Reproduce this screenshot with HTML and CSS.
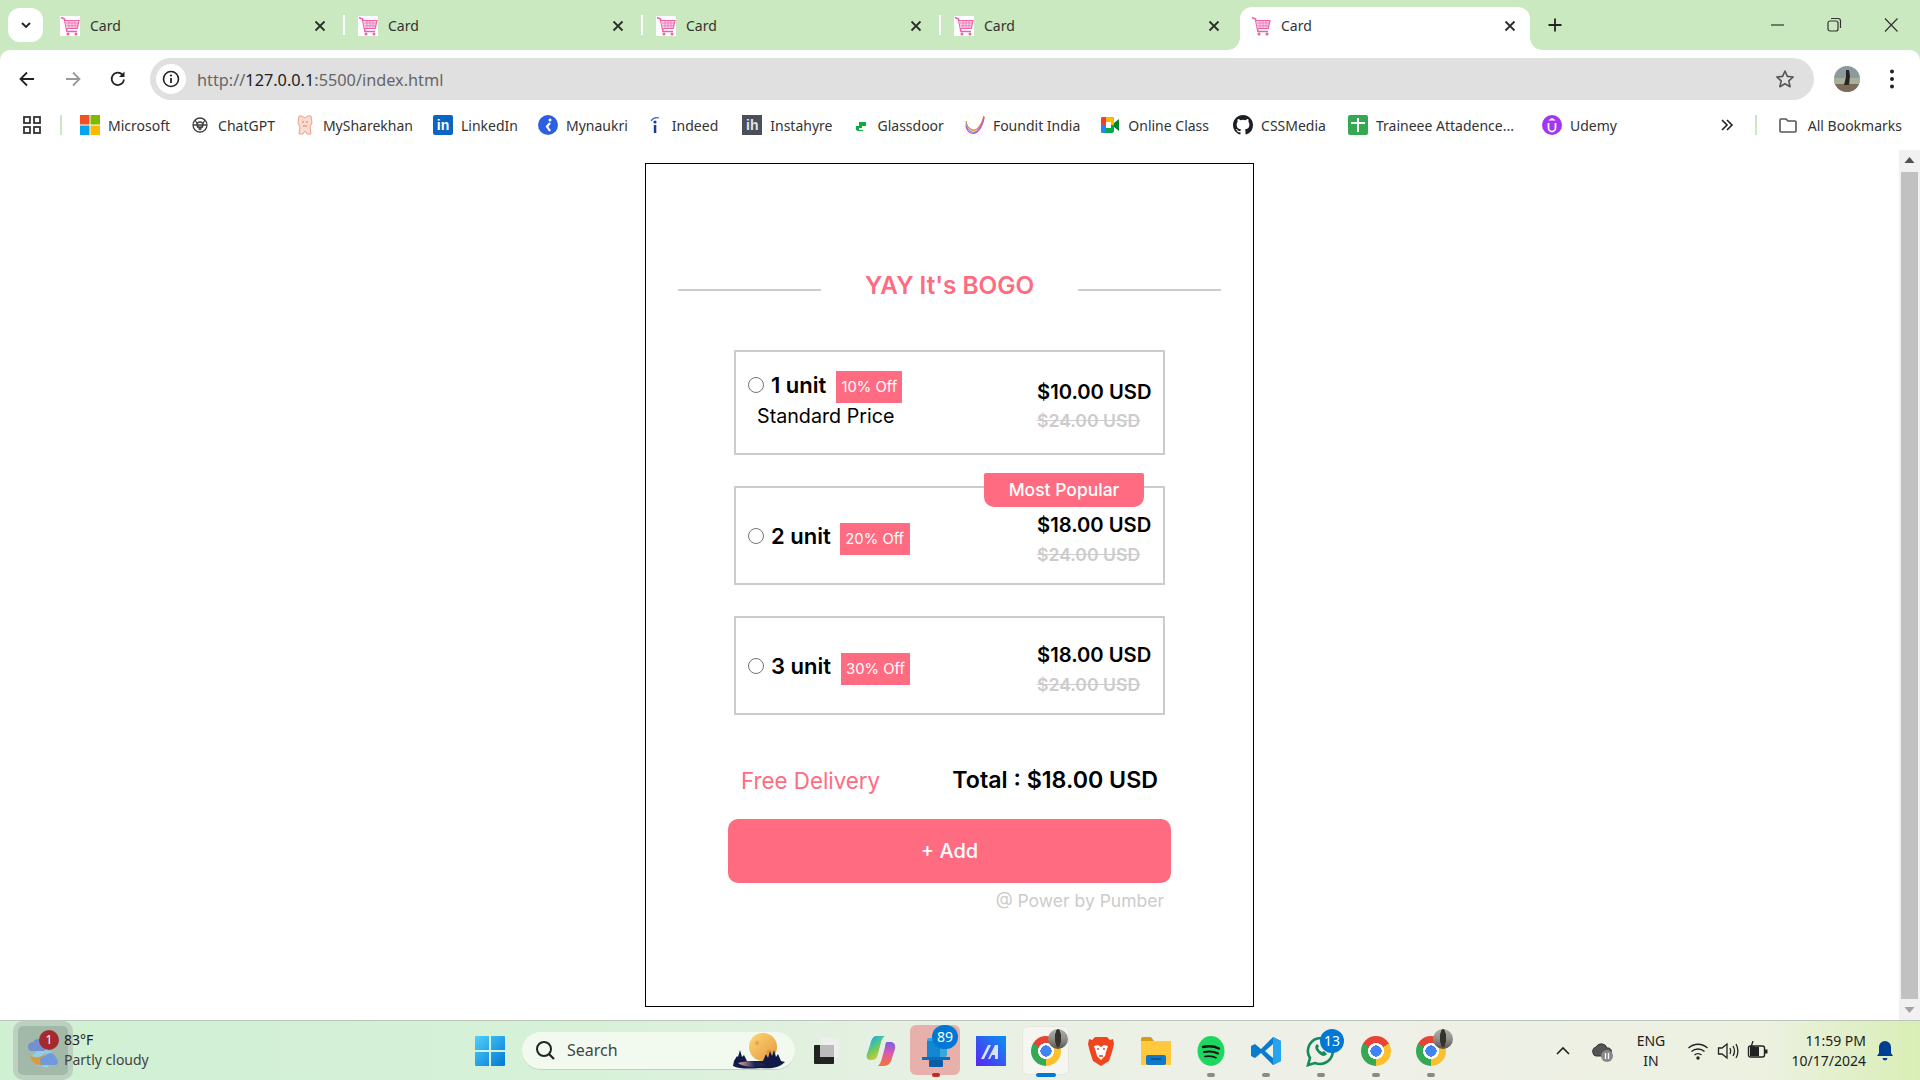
FILE: index.html
```html
<!DOCTYPE html>
<html lang="en">
<head>
<meta charset="utf-8">
<title>Card</title>
<link rel="stylesheet" href="styles.css">
</head>
<body>
<svg class="defs" width="0" height="0" aria-hidden="true">
  <symbol id="cart" viewBox="0 0 20 20">
    <rect width="20" height="20" fill="#fff"/>
    <path d="M1 1.500l3.500 1.500 2.500 12.500h10" fill="none" stroke="#ee5fa7" stroke-width="1.600"/>
    <path d="M5 4.500h14l-1.800 8H6.600" fill="#fbd3e6" stroke="#ee5fa7" stroke-width="1.200"/>
    <path d="M6 7h12.500M6.500 9.800h11.500M9 4.500v8M12 4.500v8M15 4.500v8" stroke="#ef74b3" stroke-width=".8"/>
    <circle cx="8" cy="18" r="1.500" fill="#ee5fa7"/><circle cx="16" cy="18" r="1.500" fill="#ee5fa7"/>
  </symbol>
  <symbol id="close" viewBox="0 0 20 20"><path d="M5.500 5.500l9 9M14.500 5.500l-9 9" stroke="#2a2f2a" stroke-width="1.800" fill="none"/></symbol>
</svg>

<div class="tabbar">
  <div class="tab-chip"><svg width="14" height="14" viewBox="0 0 14 14"><path d="M3 5l4 4 4-4" fill="none" stroke="#222" stroke-width="1.800"/></svg></div>
  <div class="tab"><svg class="fav"><use href="#cart"/></svg><span class="tab-title">Card</span><svg class="tab-x"><use href="#close"/></svg></div>
  <div class="tab"><svg class="fav"><use href="#cart"/></svg><span class="tab-title">Card</span><svg class="tab-x"><use href="#close"/></svg></div>
  <div class="tab"><svg class="fav"><use href="#cart"/></svg><span class="tab-title">Card</span><svg class="tab-x"><use href="#close"/></svg></div>
  <div class="tab"><svg class="fav"><use href="#cart"/></svg><span class="tab-title">Card</span><svg class="tab-x"><use href="#close"/></svg></div>
  <div class="tab tab-active"><svg class="fav"><use href="#cart"/></svg><span class="tab-title">Card</span><svg class="tab-x"><use href="#close"/></svg></div>
  <svg class="tab-plus" width="20" height="20" viewBox="0 0 20 20"><path d="M10 3.500v13M3.500 10h13" stroke="#222" stroke-width="1.800"/></svg>
  <div class="win-controls">
    <svg width="20" height="20" viewBox="0 0 20 20"><path d="M4 10h13" stroke="#333" stroke-width="1.200"/></svg>
    <svg width="20" height="20" viewBox="0 0 20 20"><rect x="4" y="6" width="10" height="10" rx="2" fill="none" stroke="#333" stroke-width="1.200"/><path d="M7 3.500h7a2.500 2.500 0 0 1 2.500 2.500v7" fill="none" stroke="#333" stroke-width="1.200"/></svg>
    <svg width="20" height="20" viewBox="0 0 20 20"><path d="M4 3.500l12.500 13M16.500 3.500L4 16.500" stroke="#333" stroke-width="1.200"/></svg>
  </div>
</div>

<div class="toolbar">
  <svg class="tool tool-back" width="20" height="20" viewBox="0 0 20 20"><path d="M17 10H4M10 3.500L3.500 10l6.500 6.500" fill="none" stroke="#222" stroke-width="1.800"/></svg>
  <svg class="tool tool-fwd" width="20" height="20" viewBox="0 0 20 20"><path d="M3 10h13M10 3.500l6.500 6.500-6.500 6.500" fill="none" stroke="#9a9a9a" stroke-width="1.800"/></svg>
  <svg class="tool tool-reload" width="20" height="20" viewBox="0 0 20 20"><path d="M16 10.500A6.200 6.200 0 1 1 14.300 5.500" fill="none" stroke="#222" stroke-width="1.800"/><path d="M16.500 2.500v5.500H11z" fill="#222"/></svg>
  <div class="omnibox">
    <span class="omni-info"><svg width="20" height="20" viewBox="0 0 20 20"><circle cx="10" cy="10" r="7.500" fill="none" stroke="#222" stroke-width="1.600"/><path d="M10 9v5" stroke="#222" stroke-width="1.800"/><circle cx="10" cy="6.500" r="1.100" fill="#222"/></svg></span>
    <span class="omni-url">http://<b class="omni-host">127.0.0.1</b>:5500/index.html</span>
    <svg class="omni-star" width="22" height="22" viewBox="0 0 22 22"><path d="M11 3l2.400 5.400 5.800.6-4.400 3.900 1.300 5.800L11 15.700l-5.100 3 1.300-5.800L2.800 9l5.800-.6z" fill="none" stroke="#555" stroke-width="1.600" stroke-linejoin="round"/></svg>
  </div>
  <svg class="avatar" width="26" height="26" viewBox="0 0 26 26"><defs><clipPath id="av"><circle cx="13" cy="13" r="13"/></clipPath></defs><g clip-path="url(#av)"><rect width="26" height="26" fill="#8b9a9c"/><rect y="12" width="26" height="6" fill="#a9b09a"/><rect y="18" width="26" height="8" fill="#7d6a58"/><path d="M12 4h3l1 6-1 9h-5l2-8z" fill="#26241f"/></g></svg>
  <svg class="tool-menu" width="6" height="22" viewBox="0 0 6 22"><circle cx="3" cy="3.500" r="2" fill="#222"/><circle cx="3" cy="11" r="2" fill="#222"/><circle cx="3" cy="18.500" r="2" fill="#222"/></svg>
</div>

<div class="bookmarks">
  <svg class="bm-apps" width="20" height="20" viewBox="0 0 20 20"><g fill="none" stroke="#333" stroke-width="1.800"><rect x="2" y="2" width="6" height="6"/><rect x="12" y="2" width="6" height="6"/><rect x="2" y="12" width="6" height="6"/><rect x="12" y="12" width="6" height="6"/></g></svg>
  <span class="bm-sep bm-sep-first"></span>
  <div class="bm-list">
    <div class="bm"><svg class="fav" viewBox="0 0 20 20"><rect width="9.500" height="9.500" fill="#f25022"/><rect x="10.500" width="9.500" height="9.500" fill="#7fba00"/><rect y="10.500" width="9.500" height="9.500" fill="#00a4ef"/><rect x="10.500" y="10.500" width="9.500" height="9.500" fill="#ffb900"/></svg>Microsoft</div>
    <div class="bm"><svg class="fav" viewBox="0 0 20 20"><g fill="none" stroke="#444" stroke-width="1.300"><circle cx="10" cy="10" r="7"/><circle cx="10" cy="10" r="3"/><path d="M5 5l6 10M15 5L9 15M3 10h14"/></g></svg>ChatGPT</div>
    <div class="bm"><svg class="fav" viewBox="0 0 20 20"><path d="M4 1h3l3 2 3-2h3l1 7-2 4 1 7h-4l-2-3-2 3H4l1-7-2-4z" fill="#fbdcd0" stroke="#f0a18c"/><path d="M7 7h2M11 7h2M8 11h4" stroke="#e8795e"/></svg>MySharekhan</div>
    <div class="bm"><span class="fav fav-li">in</span>LinkedIn</div>
    <div class="bm"><svg class="fav" viewBox="0 0 20 20"><circle cx="10" cy="10" r="10" fill="#2d5fe0"/><circle cx="12" cy="5" r="1.500" fill="#fff"/><path d="M12 8l-3 3.500 3 4.500" fill="none" stroke="#fff" stroke-width="2.200"/></svg>Mynaukri</div>
    <div class="bm bm-indeed"><svg class="fav-narrow" viewBox="0 0 12 20"><path d="M2 6c2-3 5-4 8-3" fill="none" stroke="#2f66c8" stroke-width="1.200"/><circle cx="6" cy="7" r="1.600" fill="#143d9c"/><rect x="4.800" y="10" width="2.500" height="8" fill="#143d9c"/></svg>Indeed</div>
    <div class="bm bm-insta"><span class="fav fav-ih">ih</span>Instahyre</div>
    <div class="bm bm-glass"><svg class="fav-narrow" viewBox="0 0 12 20"><path d="M4 7h7v4H7v2H4zM1 11h3v4h4v1H3l-2-1z" fill="#0caa41"/></svg>Glassdoor</div>
    <div class="bm bm-foundit"><svg class="fav" viewBox="0 0 20 20"><g fill="none" stroke-width="1.300"><path d="M1 6c1 8 7 11 11 8s6-8 7-13" stroke="#f08a1d"/><path d="M1 9c1 7 7 10 11 7s6-9 7-13" stroke="#3cb4e6"/><path d="M1 11c1 7 7 9 11 6s6-10 7-15" stroke="#e83fd0"/></g></svg>Foundit India</div>
    <div class="bm"><svg class="fav" viewBox="0 0 20 20"><rect x="1" y="2" width="13" height="16" rx="2" fill="#00ac47"/><path d="M1 10V4a2 2 0 0 1 2-2h3v8z" fill="#ea4335"/><path d="M6 2h6a2 2 0 0 1 2 2v6H6z" fill="#ffba00"/><path d="M1 10h5v8H3a2 2 0 0 1-2-2z" fill="#2684fc"/><rect x="6" y="7" width="5" height="6" fill="#fff"/><path d="M14 8l5-4v12l-5-4z" fill="#00832d"/></svg>Online Class</div>
    <div class="bm bm-css"><svg class="fav" viewBox="0 0 16 16"><path fill="#1b1f23" d="M8 0C3.580 0 0 3.580 0 8c0 3.540 2.290 6.530 5.470 7.590.4.070.55-.17.55-.38 0-.19-.01-.82-.01-1.490-2.010.37-2.530-.49-2.690-.94-.09-.23-.48-.94-.82-1.130-.28-.15-.68-.52-.01-.53.630-.01 1.080.58 1.230.82.720 1.210 1.870.87 2.330.66.070-.52.280-.87.510-1.070-1.780-.2-3.640-.89-3.640-3.950 0-.87.310-1.590.820-2.150-.080-.2-.360-1.020.080-2.120 0 0 .670-.210 2.200.820a7.500 7.500 0 0 1 4 0c1.530-1.040 2.200-.82 2.200-.82.440 1.100.160 1.920.080 2.120.510.560.820 1.270.820 2.150 0 3.070-1.870 3.750-3.650 3.950.290.250.540.730.540 1.480 0 1.070-.010 1.930-.010 2.200 0 .210.150.460.550.380A8.010 8.010 0 0 0 16 8c0-4.420-3.580-8-8-8z"/></svg>CSSMedia</div>
    <div class="bm bm-trainee"><svg class="fav" viewBox="0 0 20 20"><rect width="20" height="20" rx="2" fill="#34a853"/><path d="M10 3v14M3 8h14" stroke="#fff" stroke-width="2"/></svg>Traineee Attadence...</div>
    <div class="bm bm-udemy"><svg class="fav" viewBox="0 0 20 20"><circle cx="10" cy="10" r="10" fill="#a435f0"/><path d="M6.500 8v5a3.500 3.500 0 0 0 7 0V8" fill="none" stroke="#fff" stroke-width="1.800"/><path d="M10 3l4 2.500H6z" fill="#fff"/></svg>Udemy</div>
  </div>
  <svg class="bm-more" width="16" height="16" viewBox="0 0 16 16"><path d="M3 3l5 5-5 5M8 3l5 5-5 5" fill="none" stroke="#222" stroke-width="1.600"/></svg>
  <span class="bm-sep bm-sep-last"></span>
  <div class="bm bm-all"><svg class="fav" viewBox="0 0 20 20"><path d="M2 5a1 1 0 0 1 1-1h5l2 2h7a1 1 0 0 1 1 1v9a1 1 0 0 1-1 1H3a1 1 0 0 1-1-1z" fill="none" stroke="#555" stroke-width="1.600"/></svg>All Bookmarks</div>
</div>

<div class="viewport">
  <main class="stage">
    <section class="card">
      <div class="title-row">
        <span class="title-line"></span>
        <h1 class="title">YAY It's BOGO</h1>
        <span class="title-line"></span>
      </div>

      <div class="option">
        <div class="option-left option-left-first">
          <div class="unit-row">
            <input class="radio" type="radio" name="unit">
            <span class="unit-name">1 unit</span>
            <span class="off off-1">10% Off</span>
          </div>
          <p class="unit-note">Standard Price</p>
        </div>
        <div class="prices">
          <span class="price">$10.00 USD</span>
          <span class="price-old">$24.00 USD</span>
        </div>
      </div>

      <div class="option option-short">
        <span class="popular">Most Popular</span>
        <div class="option-left">
          <div class="unit-row">
            <input class="radio" type="radio" name="unit">
            <span class="unit-name">2 unit</span>
            <span class="off off-2">20% Off</span>
          </div>
        </div>
        <div class="prices">
          <span class="price">$18.00 USD</span>
          <span class="price-old">$24.00 USD</span>
        </div>
      </div>

      <div class="option option-short">
        <div class="option-left">
          <div class="unit-row">
            <input class="radio" type="radio" name="unit">
            <span class="unit-name">3 unit</span>
            <span class="off off-3">30% Off</span>
          </div>
        </div>
        <div class="prices">
          <span class="price">$18.00 USD</span>
          <span class="price-old">$24.00 USD</span>
        </div>
      </div>

      <div class="summary">
        <span class="delivery">Free Delivery</span>
        <span class="total">Total : $18.00 USD</span>
      </div>
      <button class="add" type="button">+ Add</button>
      <p class="credit">@ Power by Pumber</p>
    </section>
  </main>
  <div class="scrollbar">
    <svg class="sb-arrow" width="21" height="21" viewBox="0 0 21 21"><path d="M10.500 7l5 6h-10z" fill="#505050"/></svg>
    <div class="sb-thumb"></div>
    <svg class="sb-arrow" width="21" height="21" viewBox="0 0 21 21"><path d="M10.500 14l5-6h-10z" fill="#a3a3a3"/></svg>
  </div>
</div>

<footer class="taskbar">
  <div class="weather">
    <div class="weather-tile">
      <svg width="34" height="38" viewBox="0 0 34 38"><path d="M6 24l8-8 12 4-4 16-10-2z" fill="#8fd0e6"/><path d="M4 24c6 2 12 2 16-4l-4 14c-6-1-10-4-12-10z" fill="#d99a3c"/><path d="M2 16a5 5 0 0 1 5-6 6 6 0 0 1 11 2 4 4 0 0 1 0 7H5a3.500 3.500 0 0 1-3-3z" fill="#7391cf"/><path d="M14 30a5 5 0 0 1 5-6 6 6 0 0 1 11 2 4 4 0 0 1 0 7H17a3.500 3.500 0 0 1-3-3z" fill="#6f9ade"/></svg>
      <span class="weather-alert">1</span>
    </div>
    <div class="weather-text"><span class="weather-temp">83°F</span><span class="weather-desc">Partly cloudy</span></div>
  </div>
  <svg class="start" width="30" height="30" viewBox="0 0 30 30"><defs><linearGradient id="wg" x1="0" y1="0" x2="1" y2="1"><stop offset="0" stop-color="#4fd0fa"/><stop offset="1" stop-color="#0078d4"/></linearGradient></defs><path d="M0 1a1 1 0 0 1 1-1h13v14H0zM16 0h13a1 1 0 0 1 1 1v13H16zM0 16h14v14H1a1 1 0 0 1-1-1zM16 16h14v13a1 1 0 0 1-1 1H16z" fill="url(#wg)"/></svg>
  <div class="search">
    <svg width="22" height="22" viewBox="0 0 22 22"><circle cx="10" cy="10" r="7" fill="none" stroke="#222" stroke-width="2"/><path d="M15 15l5 5" stroke="#222" stroke-width="2.200"/></svg>
    <span class="search-text">Search</span>
    <svg class="search-art" width="60" height="38" viewBox="0 0 60 38"><defs><linearGradient id="mg" x1="0" y1="0" x2="1" y2="1"><stop offset="0" stop-color="#fbd877"/><stop offset="1" stop-color="#e8953a"/></linearGradient><linearGradient id="gg" x1="0" y1="0" x2="1" y2="0"><stop offset="0" stop-color="#e5a9a0"/><stop offset=".6" stop-color="#1a2552"/></linearGradient></defs><circle cx="30" cy="15" r="14" fill="url(#mg)"/><circle cx="24" cy="11" r="2" fill="#d88d3c" opacity=".6"/><circle cx="36" cy="20" r="2.500" fill="#d88d3c" opacity=".6"/><path d="M1 29l3-5 1 1 2-7 2 7 2-2 3 6h16l3-7 2 4 2-7 2 5 2-6 2 7 2-3 3 7 4 1c-6 6-14 7-24 6-12 1-22 1-28-2z" fill="#101a48"/><path d="M5 31c10-3 22-2 28 2-10 4-22 2-28-2z" fill="url(#gg)"/></svg>
  </div>
  <div class="apps">
    <div class="app"><svg width="30" height="30" viewBox="0 0 30 30"><rect x="3" y="9" width="20" height="19" rx="1" fill="#222"/><rect x="9" y="2" width="19" height="19" rx="1" fill="#eee"/><rect x="9" y="9" width="14" height="12" fill="#bbb"/></svg></div>
    <div class="app"><svg width="30" height="30" viewBox="0 0 30 30"><defs><linearGradient id="cp1" x1="0" y1="0" x2="0.600" y2="1"><stop offset="0" stop-color="#2f8fe8"/><stop offset=".35" stop-color="#36c0b0"/><stop offset=".7" stop-color="#8ccb45"/><stop offset="1" stop-color="#f6c53a"/></linearGradient><linearGradient id="cp2" x1="0.500" y1="0" x2="0.500" y2="1"><stop offset="0" stop-color="#7a5fe6"/><stop offset=".5" stop-color="#e05aa6"/><stop offset="1" stop-color="#f2772f"/></linearGradient></defs><path d="M21 6h4c3 0 5 3 4 7l-3 9c-1 5-4 8-8 8h-6c2-2 3-4 4-8l3-11c0-3 1-5 2-5z" fill="url(#cp2)"/><path d="M10 0h9c-2 1-3 3-4 6l-3 12c-1 3-2 6-6 6H4c-3 0-4-3-3-6l3-9c1-5 3-9 6-9z" fill="url(#cp1)"/></svg></div>
    <div class="app app-running"><span class="app-bg app-bg-red"></span><svg class="app-icon" width="30" height="34" viewBox="0 0 30 34"><rect x="6" y="4" width="20" height="19" rx="2" fill="#38a8dc"/><rect x="1" y="23" width="28" height="3" fill="#0f6cbd"/><rect x="8" y="26" width="14" height="7" rx="1" fill="#0a5ea8"/><rect x="6" y="7" width="13" height="16" fill="#1487d4"/></svg><span class="count count-89">89</span><span class="pill pill-red"></span></div>
    <div class="app"><svg width="30" height="30" viewBox="0 0 30 30"><defs><linearGradient id="mp" x1="0" y1="1" x2="1" y2="0"><stop offset="0" stop-color="#5a24f5"/><stop offset="1" stop-color="#0a92f0"/></linearGradient></defs><rect width="30" height="30" fill="url(#mp)"/><path d="M5 23l7-14h3l-7 14zM12 23l7-14h3v14h-3v-4h-3l-2 4z" fill="#d8e2ff"/></svg></div>
    <div class="app app-running"><span class="app-bg app-bg-active"></span><span class="chrome"></span><span class="chrome-user"></span><span class="pill pill-blue"></span></div>
    <div class="app"><svg width="26" height="30" viewBox="0 0 26 30"><path d="M7 1h12l3 3 3-1 1 5-2 8-3 9-8 5-8-5-3-9L0 8l1-5 3 1z" fill="#f1451f"/><path d="M6 10l4-1 3 2 3-2 4 1-2 6-1 4-4 4-4-4-1-4z" fill="#fff"/><path d="M9 13h2M15 13h2M11 20h4" stroke="#f1451f" stroke-width="1.600"/></svg></div>
    <div class="app"><svg width="30" height="28" viewBox="0 0 30 28"><path d="M0 2a2 2 0 0 1 2-2h8l3 4h-13z" fill="#d89c12"/><rect y="4" width="30" height="24" fill="#ffc83d"/><rect x="5" y="18" width="20" height="10" rx="2" fill="#0f78c8"/><path d="M10 22h10" stroke="#074f88" stroke-width="1.500"/></svg></div>
    <div class="app app-running"><svg width="28" height="30" viewBox="0 0 28 30"><ellipse cx="14" cy="15" rx="13.500" ry="15" fill="#1ed760"/><g fill="none" stroke="#141414" stroke-linecap="round"><path d="M6 11c6-1.500 11-1 16 1.500" stroke-width="2.400"/><path d="M7 16c5-1 10-.7 14 1.500" stroke-width="2"/><path d="M8 20.500c4-.8 8-.5 11 1.200" stroke-width="1.700"/></g></svg><span class="pill pill-gray"></span></div>
    <div class="app app-running"><svg width="30" height="30" viewBox="0 0 30 30"><path d="M22 1l8 4v20l-8 4-12-12-6 5-4-2V10l4-2 6 5z" fill="#0a7cd0"/><path d="M22 8l-8 7 8 7z" fill="#eef0e6"/><path d="M22 1l8 4v20l-8 4z" fill="#23a5ef"/></svg><span class="pill pill-gray"></span></div>
    <div class="app app-running"><svg width="30" height="32" viewBox="0 0 30 32"><path d="M15 3a13 13 0 0 0-11 20L2 30l7-2a13 13 0 1 0 6-25z" fill="none" stroke="#128c5a" stroke-width="2.600"/><path d="M10 10c-1 1-1 3 0 5 2 3 4 5 7 6 2 0 3-1 4-2l-3-3-2 1c-2-1-3-2-4-4l1-2-2-2z" fill="#128c5a"/></svg><span class="count count-13">13</span><span class="pill pill-gray"></span></div>
    <div class="app app-running"><span class="chrome"></span><span class="pill pill-gray"></span></div>
    <div class="app app-running"><span class="chrome"></span><span class="chrome-user"></span><span class="pill pill-gray"></span></div>
  </div>
  <div class="tray">
    <div class="tray-cell tray-chev"><svg width="16" height="12" viewBox="0 0 16 12"><path d="M2 9l6-6 6 6" fill="none" stroke="#222" stroke-width="1.600"/></svg></div>
    <div class="tray-cell tray-cloud"><svg width="24" height="24" viewBox="0 0 24 24"><path d="M3 14a4.500 4.500 0 0 1 3-6 6 6 0 0 1 11 1 4 4 0 0 1 1 8H6a3.500 3.500 0 0 1-3-3z" fill="#555" stroke="#333"/><circle cx="17" cy="17" r="6" fill="#888"/><path d="M15.500 14v6M18.500 14v6" stroke="#fff" stroke-width="1.300"/></svg></div>
    <div class="tray-cell tray-lang"><span>ENG</span><span>IN</span></div>
    <div class="tray-cell tray-icon"><svg width="22" height="20" viewBox="0 0 22 20"><g fill="none" stroke="#222" stroke-width="1.400"><path d="M1.500 7c5.500-5 13.500-5 19 0"/><path d="M4.500 10.500c3.800-3.400 9.200-3.400 13 0"/><path d="M7.500 14c2-1.800 5-1.800 7 0"/></g><circle cx="11" cy="17" r="1.700" fill="#222"/></svg></div>
    <div class="tray-cell tray-icon"><svg width="22" height="20" viewBox="0 0 22 20"><g fill="none" stroke="#222" stroke-width="1.300"><path d="M1.500 7h3.500l5-4v14l-5-4H1.500z"/><path d="M13 7c1 2 1 4 0 6M16 5c1.800 3 1.800 7 0 10M19 3c2.500 4 2.500 10 0 14"/></g></svg></div>
    <div class="tray-cell tray-icon"><svg width="22" height="20" viewBox="0 0 22 20"><rect x="1.500" y="5" width="16" height="11" rx="2" fill="none" stroke="#222" stroke-width="1.400"/><rect x="18" y="8.500" width="2.500" height="4" fill="#222"/><path d="M3 6h9v9H3z" fill="#222"/><path d="M6 0L4 6h3l-2 5" fill="none" stroke="#222" stroke-width="1.300"/></svg></div>
    <div class="clock"><span>11:59 PM</span><span>10/17/2024</span></div>
    <div class="tray-cell tray-bell"><svg width="18" height="22" viewBox="0 0 18 22"><path d="M9 1a6 6 0 0 0-6 6v6l-2 3h16l-2-3V7a6 6 0 0 0-6-6z" fill="#003e92"/><path d="M6.500 18a2.500 2.500 0 0 0 5 0z" fill="#003e92"/></svg></div>
  </div>
</footer>
</body>
</html>
```

FILE: styles.css
```css
* { box-sizing: border-box; }

html, body { margin: 0; padding: 0; height: 100%; }

body {
  display: flex;
  flex-direction: column;
  height: 1080px;
  overflow: hidden;
  background: #cbe9c0;
  font-family: "Noto Sans", "Liberation Sans", sans-serif;
  color: #222;
}

.defs { position: absolute; }

svg { flex: none; display: block; }

/* Tab strip */
.tabbar {
  display: flex;
  align-items: flex-end;
  height: 50px;
  flex: none;
  padding-left: 8px;
  position: relative;
}
.tab-chip {
  width: 35px;
  height: 34px;
  margin: 0 5px 8px 0;
  background: #fff;
  border-radius: 12px;
  display: flex;
  align-items: center;
  justify-content: center;
}
.tab {
  position: relative;
  width: 298px;
  height: 43px;
  padding: 0 16px 5px 12px;
  display: flex;
  align-items: center;
  font-size: 14px;
  color: #333;
}
.tab:not(.tab-active):not(:nth-child(5))::after {
  content: "";
  position: absolute;
  right: 1px;
  top: 8px;
  width: 2px;
  height: 20px;
  background: #fff;
}
.fav { width: 20px; height: 20px; flex: none; }
.tab-title { margin: -1px 0 0 10px; flex: 1; line-height: 20px; }
.tab-x { width: 20px; height: 20px; }
.tab-active {
  width: 290px;
  background: #fff;
  border-radius: 12px 12px 0 0;
  padding: 0 10px 5px 11px;
}
.tab-active::before,
.tab-active::after {
  content: "";
  position: absolute;
  bottom: 0;
  width: 12px;
  height: 12px;
}
.tab-active::before { left: -12px; background: radial-gradient(circle at 0 0, transparent 11.500px, #fff 12px); }
.tab-active::after { right: -12px; background: radial-gradient(circle at 100% 0, transparent 11.500px, #fff 12px); }
.tab-plus { margin: 0 0 15px 15px; }
.win-controls {
  margin-left: auto;
  margin-bottom: 15px;
  padding-right: 19px;
  display: flex;
  gap: 37px;
}

/* Toolbar */
.toolbar {
  height: 50px;
  flex: none;
  background: #fff;
  border-radius: 10px 10px 0 0;
  display: flex;
  align-items: center;
  padding: 0 25px 0 17px;
}
.tool-back { margin-right: 26px; }
.tool-fwd { margin-right: 25px; }
.tool-reload { margin-right: 22px; }
.omnibox {
  width: 1666px;
  height: 42px;
  margin-top: 8px;
  background: #e0e0e0;
  border-radius: 21px;
  display: flex;
  align-items: center;
  padding: 0 18px 0 6px;
}
.toolbar > svg { margin-top: 8px; }
.omni-info {
  width: 30px;
  height: 30px;
  border-radius: 50%;
  background: #fff;
  display: flex;
  align-items: center;
  justify-content: center;
}
.omni-url { margin: 1px 0 0 11px; font-size: 16.300px; color: #666; flex: 1; }
.omni-host { font-weight: 400; color: #222; }
.avatar { margin-left: 20px; }
.tool-menu { margin-left: 29px; }

/* Bookmarks */
.bookmarks {
  height: 50px;
  flex: none;
  background: #fff;
  display: flex;
  align-items: center;
  padding: 0 18px 0 22px;
  font-size: 14px;
  color: #333;
}
.bm-sep { width: 2px; height: 20px; background: #cbe9c0; flex: none; }
.bm-sep-first { margin: 0 18px 0 18px; }
.bm-list { display: flex; align-items: center; gap: 20px; }
.bm { display: flex; align-items: center; gap: 8px; white-space: nowrap; }
.fav-narrow { width: 14px; height: 20px; flex: none; }
.bm-indeed { gap: 10px; }
.bm-insta { margin-left: 4px; }
.bm-glass { gap: 9px; margin-left: 2px; }
.bm-foundit { margin-left: 1px; }
.bm-css { margin-left: 4px; }
.bm-trainee { margin-left: 2px; margin-right: 2px; }
.bm-udemy { margin-left: 6px; }
.fav-li {
  background: #0a66c2;
  color: #fff;
  font: 700 14px/20px "Liberation Sans", sans-serif;
  text-align: center;
  border-radius: 2px;
}
.fav-ih {
  background: #4a4f5c;
  color: #e4e4e4;
  font: 700 14px/20px "Liberation Sans", sans-serif;
  text-align: center;
}
.bm-more { margin-left: auto; }
.bm-sep-last { margin: 0 21px 0 20px; }
.bm-all { gap: 10px; }

/* Page */
.viewport {
  flex: 1;
  display: flex;
  min-height: 0;
  background: #fff;
}
.stage {
  flex: 1;
  display: flex;
  justify-content: center;
  align-items: flex-start;
  padding-top: 13px;
}
.card {
  width: 609px;
  height: 844px;
  border: 1px solid #000;
  padding-top: 106px;
  display: flex;
  flex-direction: column;
  align-items: center;
  font-family: Inter, "Liberation Sans", sans-serif;
  color: #000;
}
.title-row {
  width: 543px;
  height: 30px;
  display: flex;
  justify-content: space-between;
  margin-bottom: 50px;
}
.title-line {
  width: 143px;
  height: 2px;
  margin-top: 19px;
  background: #ccc;
}
.title {
  margin: 0;
  font-size: 24.300px;
  line-height: 30px;
  font-weight: 600;
  color: #ff6b81;
}
.option {
  position: relative;
  width: 431px;
  height: 105px;
  margin-bottom: 31px;
  border: 2px solid #ccc;
  padding: 0 12px;
  display: flex;
  justify-content: space-between;
  align-items: center;
}
.option-short { height: 99px; }
.option-short + .option-short { margin-bottom: 0; }
.popular {
  position: absolute;
  top: -15px;
  right: 19px;
  width: 160px;
  height: 34px;
  background: #ff6b81;
  color: #fff;
  font-size: 17.500px;
  font-weight: 500;
  line-height: 34px;
  text-align: center;
  border-radius: 2px 2px 10px 10px;
}
.option-left { align-self: flex-start; padding-top: 34px; }
.option-left-first { padding-top: 19px; }
.unit-row { display: flex; align-items: center; }
.radio { width: 16px; height: 16px; margin: 0 7px 4px 0; flex: none; }
.option-short .radio { margin-bottom: 6px; }
.unit-name { font-size: 22px; line-height: 28px; font-weight: 600; margin-bottom: 4px; }
.option-short .unit-name { margin-bottom: 6px; }
.off {
  height: 32px;
  margin-left: 10px;
  background: #ff6b81;
  color: #fff;
  font-size: 14.800px;
  line-height: 32px;
  text-align: center;
}
.off-1 { width: 66px; }
.off-2 { width: 70px; margin-left: 9px; }
.off-3 { width: 69px; }
.unit-note { margin: 1px 0 0 9px; font-size: 19.700px; line-height: 24px; }
.prices {
  display: flex;
  flex-direction: column;
  gap: 5px;
  padding-top: 8px;
  width: 114px;
}
.option-short .prices { gap: 6px; }
.price { font-size: 20.200px; line-height: 24px; font-weight: 600; white-space: nowrap; }
.price-old {
  font-size: 17.600px;
  line-height: 24px;
  font-weight: 600;
  color: #ccc;
  text-decoration: line-through;
  white-space: nowrap;
}
.summary {
  width: 431px;
  height: 30px;
  margin-top: 50px;
  padding: 0 7px 0 7px;
  display: flex;
  justify-content: space-between;
  align-items: center;
}
.delivery { font-size: 22.300px; color: #ff6b81; }
.total { font-size: 23.200px; font-weight: 600; }
.add {
  width: 443px;
  height: 64px;
  margin-top: 24px;
  border: 0;
  border-radius: 10px;
  background: #ff6b81;
  color: #fff;
  font: 500 20px Inter, "Liberation Sans", sans-serif;
}
.credit {
  width: 431px;
  margin: 7px 0 0;
  padding-right: 1px;
  font-size: 17.500px;
  line-height: 22px;
  color: #ccc;
  text-align: right;
}

/* Scrollbar */
.scrollbar {
  width: 21px;
  flex: none;
  background: #f1f1f1;
  display: flex;
  flex-direction: column;
  align-items: center;
}
.sb-thumb { flex: 1; width: 17px; margin: 1px 0 0; background: #c1c1c1; }

/* Taskbar */
.taskbar {
  height: 60px;
  flex: none;
  display: flex;
  align-items: center;
  border-top: 1px solid #b9c6b9;
  background: linear-gradient(90deg, #d0f0d4 0%, #d6f1d8 30%, #e9f0e4 50%, #eff0e8 70%, #ecf1e0 92%, #d9eeb6 100%);
  font-size: 14px;
  color: #222;
}
.weather {
  width: 475px;
  flex: none;
  height: 59px;
  display: flex;
  align-items: center;
  padding-left: 13px;
  position: relative;
}
.weather-tile {
  position: relative;
  width: 60px;
  height: 59px;
  background: #a2b9a9;
  border: 5px solid #bcd0c0;
  border-radius: 10px;
  display: flex;
  align-items: center;
  justify-content: center;
}
.weather-alert {
  position: absolute;
  top: 4px;
  left: 21px;
  width: 20px;
  height: 20px;
  border-radius: 50%;
  background: #a52a30;
  color: #fff;
  font-size: 12px;
  line-height: 20px;
  text-align: center;
}
.weather-text { display: flex; flex-direction: column; margin: -2px 0 0 -9px; line-height: 20px; position: relative; }
.weather-desc { color: #444; }
.search {
  width: 273px;
  height: 38px;
  margin-left: 17px;
  background: #f2faf0;
  border-radius: 19px;
  border-bottom: 1px solid #c3d0c3;
  display: flex;
  align-items: center;
  padding-left: 12px;
  position: relative;
}
.search-text { margin-left: 11px; font-size: 16px; color: #444; }
.search-art { position: absolute; right: 2px; top: 0; }
.apps { display: flex; margin-left: 3px; }
.app {
  position: relative;
  width: 55px;
  height: 59px;
  display: flex;
  align-items: center;
  justify-content: center;
}
.app-bg { position: absolute; border-radius: 6px; }
.app-bg-red { left: 2px; top: 4px; width: 50px; height: 50px; background: #e8b0aa; }
.app-bg-active { left: 4px; top: 5px; width: 47px; height: 49px; background: #f5f6f0; border: 1px solid #e6e8e0; }
.app-icon { position: relative; }
.count {
  position: absolute;
  height: 24px;
  min-width: 24px;
  border-radius: 12px;
  background: #0078d4;
  color: #fff;
  font-size: 14px;
  line-height: 24px;
  text-align: center;
}
.count-89 { left: 24px; top: 4px; width: 26px; }
.count-13 { left: 27px; top: 8px; }
.pill { position: absolute; bottom: 3px; left: 50%; transform: translateX(-50%); width: 8px; height: 4px; border-radius: 2px; }
.pill-red { background: #c42b1c; }
.pill-gray { background: #8a8a8a; }
.pill-blue { width: 20px; background: #0078d4; }
.chrome {
  position: relative;
  width: 30px;
  height: 30px;
  border-radius: 50%;
  background:
    radial-gradient(circle, #3f84f2 0 26%, #fff 27% 37%, transparent 38%),
    conic-gradient(#ea4335 0 60deg, #fbc02d 60deg 180deg, #34a853 180deg 300deg, #ea4335 300deg);
}
.chrome-user {
  position: absolute;
  left: 30px;
  top: 8px;
  width: 20px;
  height: 20px;
  border-radius: 50%;
  background: radial-gradient(ellipse 16% 50% at 50% 45%, #35322d 0 85%, transparent 100%), linear-gradient(180deg, #b0b0aa 0%, #8f8f8a 50%, #5a534c 100%);
}
.tray { margin-left: auto; display: flex; align-items: center; padding-right: 16px; height: 59px; }
.tray-cell { display: flex; align-items: center; justify-content: center; }
.tray-chev { width: 36px; }
.tray-cloud { width: 42px; }
.tray-lang { width: 56px; flex-direction: column; line-height: 20px; margin-right: 4px; }
.tray-icon { width: 30px; }
.clock { width: 93px; display: flex; flex-direction: column; align-items: flex-end; line-height: 20px; }
.tray-bell { width: 38px; }
```
